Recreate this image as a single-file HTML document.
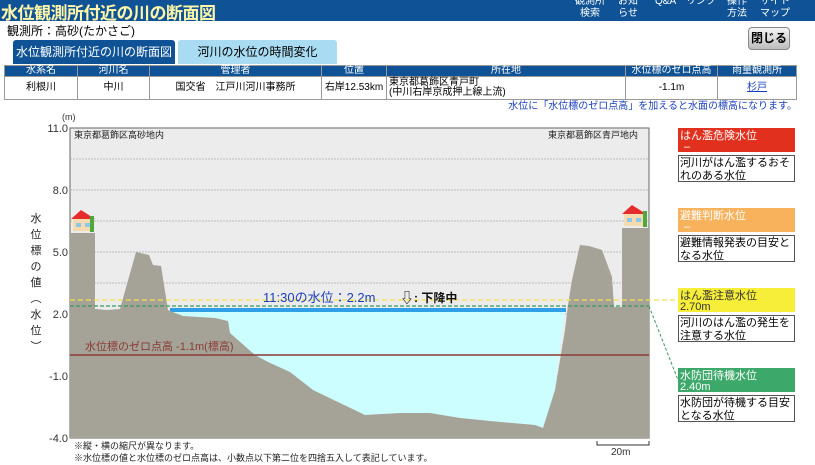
<!DOCTYPE html>
<html><head><meta charset="utf-8"><style>
*{margin:0;padding:0;box-sizing:border-box}
body{width:815px;height:465px;overflow:hidden;background:#fff;font-family:"Liberation Sans","Noto Sans CJK JP",sans-serif;position:relative}
.hd{position:absolute;left:0;top:0;width:815px;height:21px;background:#0f5396}
.hd .t{position:absolute;left:1px;top:-1px;font-size:17px;font-weight:bold;color:#fff6a8;letter-spacing:-0.5px}
.nav{position:absolute;top:-4px;font-size:10px;color:#fff;line-height:12px;text-align:center}
.obs{position:absolute;left:7px;top:22px;font-size:12px;color:#000}
.tab{position:absolute;top:40px;height:24px;font-size:12px;text-align:center;line-height:24px;border-radius:3px 3px 0 0}
.close{position:absolute;left:748px;top:27px;width:42px;height:23px;border-radius:4px;background:linear-gradient(#f4f4f4,#bdbdbd);border:1px solid #888;font-size:12px;font-weight:bold;text-align:center;line-height:21px}
table{position:absolute;left:4px;top:65px;width:793px;border-collapse:collapse;font-size:10px}
th{background:#0f5396;color:#fff;font-weight:normal;height:11px;line-height:10px;border:1px solid #999;padding:0}
td{height:23px;border:1px solid #999;text-align:center;line-height:10px;padding:0}
.note{position:absolute;right:18px;top:97px;font-size:10px;color:#1a3fbf}
svg{position:absolute;left:0;top:0}
</style></head><body>
<div class="hd"><div class="t">水位観測所付近の川の断面図</div>
<div class="nav" style="left:575px">観測所<br>検索</div>
<div class="nav" style="left:618px">お知<br>らせ</div>
<div class="nav" style="left:655px">Q&amp;A</div>
<div class="nav" style="left:686px">リンク</div>
<div class="nav" style="left:727px">操作<br>方法</div>
<div class="nav" style="left:760px">サイト<br>マップ</div>
</div>
<div class="obs">観測所：高砂(たかさご)</div>
<div class="tab" style="left:13px;width:162px;background:#0f5396;color:#fff">水位観測所付近の川の断面図</div>
<div class="tab" style="left:178px;width:159px;background:#a9dcf2;color:#000">河川の水位の時間変化</div>
<div class="close">閉じる</div>
<table><tr><th style="width:73px">水系名</th><th style="width:72px">河川名</th><th style="width:172px">管理者</th><th style="width:65px">位置</th><th style="width:239px">所在地</th><th style="width:92px">水位標のゼロ点高</th><th>雨量観測所</th></tr>
<tr><td>利根川</td><td>中川</td><td>国交省　江戸川河川事務所</td><td>右岸12.53km</td><td style="text-align:left;padding-left:2px">東京都葛飾区青戸町<br>(中川右岸京成押上線上流)</td><td>-1.1m</td><td><span style="color:#1a3fbf;text-decoration:underline">杉戸</span></td></tr></table>
<div class="note">水位に「水位標のゼロ点高」を加えると水面の標高になります。</div>
<svg width="815" height="465" font-family="Liberation Sans,Noto Sans CJK JP,sans-serif">
<rect x="70" y="128" width="579" height="310" fill="#ececec" stroke="#666" stroke-width="1"/>
<g stroke="#aaa" stroke-dasharray="2,1" stroke-width="0.7">
<line x1="70" y1="159" x2="649" y2="159"/><line x1="70" y1="190" x2="649" y2="190"/><line x1="70" y1="221" x2="649" y2="221"/><line x1="70" y1="252" x2="649" y2="252"/><line x1="70" y1="283" x2="649" y2="283"/><line x1="70" y1="314" x2="649" y2="314"/><line x1="70" y1="345" x2="649" y2="345"/><line x1="70" y1="376" x2="649" y2="376"/><line x1="70" y1="407" x2="649" y2="407"/>
</g>
<polygon points="170,310 565,310 555,390 543,428 535,425 490,421 460,418 430,413 400,413 365,415 340,403 313,390 290,372 268,362 255,355 230,333 228,321 215,318 183,316 170,311" fill="#ccfeff"/>
<rect x="170" y="308" width="396" height="4" fill="#2f9fe6"/>
<polygon points="70,233 95,233 95,309 107,310 120,309 136,252 149,255 153,265 161,266 168,310 170,311 183,316 215,318 228,321 230,333 255,355 268,362 290,372 313,390 340,403 365,415 400,413 430,413 460,418 490,421 535,425 543,428 555,390 565,330 568,305 572,280 580,245 589,246 602,250 612,277 614,307 622,307 622,228 649,228 649,438 70,438" fill="#a5a298"/>
<line x1="70" y1="355" x2="649" y2="355" stroke="#8b3a33" stroke-width="1.5"/>
<line x1="70" y1="300" x2="678" y2="300" stroke="#f2e34a" stroke-dasharray="5,3" stroke-width="1.3"/>
<line x1="70" y1="306" x2="649" y2="306" stroke="#3a9a5c" stroke-dasharray="4,2" stroke-width="1.2"/>
<line x1="649" y1="306" x2="678" y2="380" stroke="#3a9a5c" stroke-dasharray="3,2" stroke-width="1"/>
<g font-size="9" fill="#222"><text x="74" y="138">東京都葛飾区高砂地内</text><text x="548" y="138">東京都葛飾区青戸地内</text></g>
<!-- houses -->
<g><rect x="73" y="218" width="20" height="13" fill="#f6dbb0"/><polygon points="71,219 81,210 95,219" fill="#e52b2b"/><rect x="76" y="223" width="5" height="4" fill="#8cc8e8"/><rect x="85" y="223" width="5" height="4" fill="#8cc8e8"/><rect x="90" y="216" width="4" height="16" fill="#4caa3c"/></g>
<g><rect x="624" y="213" width="20" height="13" fill="#f6dbb0"/><polygon points="622,214 632,205 646,214" fill="#e52b2b"/><rect x="627" y="218" width="5" height="4" fill="#8cc8e8"/><rect x="636" y="218" width="5" height="4" fill="#8cc8e8"/><rect x="643" y="211" width="4" height="16" fill="#4caa3c"/></g>
<g font-size="11" fill="#333" text-anchor="end"><text x="68" y="132">11.0</text><text x="68" y="194">8.0</text><text x="68" y="256">5.0</text><text x="68" y="318">2.0</text><text x="68" y="380">-1.0</text><text x="68" y="442">-4.0</text></g>
<text x="62" y="120" font-size="9" fill="#333">(m)</text>
<g font-size="11" fill="#222" text-anchor="middle"><text x="36" y="222">水</text><text x="36" y="238">位</text><text x="36" y="254">標</text><text x="36" y="270">の</text><text x="36" y="286">値</text><text x="36" y="302">︵</text><text x="36" y="318">水</text><text x="36" y="334">位</text><text x="36" y="350">︶</text></g>
<text x="263" y="302" font-size="13" fill="#1a3fbf">11:30の水位：2.2m</text>
<text x="400" y="303" font-size="14" fill="#111">⇩</text>
<text x="414" y="302" font-size="12" font-weight="bold" fill="#111">: 下降中</text>
<text x="85" y="350" font-size="11" fill="#8b3a33">水位標のゼロ点高 -1.1m(標高)</text>
<g font-size="9" fill="#222"><text x="74" y="449">※縦・横の縮尺が異なります。</text><text x="74" y="461">※水位標の値と水位標のゼロ点高は、小数点以下第二位を四捨五入して表記しています。</text></g>
<path d="M597,441 v4 h52 v-4" fill="none" stroke="#333"/><text x="611" y="455" font-size="10" fill="#333">20m</text>
<!-- legend -->
<g font-size="11">
<rect x="678" y="128" width="117" height="24" fill="#e2301f"/><text x="680" y="139" fill="#fff">はん濫危険水位</text><text x="684" y="150" fill="#fff">–</text>
<rect x="678.5" y="155.5" width="116" height="26" fill="#fff" stroke="#555"/><text x="680" y="166">河川がはん濫するおそ</text><text x="680" y="179">れのある水位</text>
<rect x="678" y="208" width="117" height="24" fill="#f8b25c"/><text x="680" y="219" fill="#fff">避難判断水位</text><text x="684" y="230" fill="#fff">–</text>
<rect x="678.5" y="235.5" width="116" height="26" fill="#fff" stroke="#555"/><text x="680" y="246">避難情報発表の目安と</text><text x="680" y="259">なる水位</text>
<rect x="678" y="288" width="117" height="24" fill="#f7ee3a"/><text x="680" y="299" fill="#333">はん濫注意水位</text><text x="680" y="310" fill="#333">2.70m</text>
<rect x="678.5" y="315.5" width="116" height="26" fill="#fff" stroke="#555"/><text x="680" y="326">河川のはん濫の発生を</text><text x="680" y="339">注意する水位</text>
<rect x="678" y="368" width="117" height="24" fill="#3ca86a"/><text x="680" y="379" fill="#fff">水防団待機水位</text><text x="680" y="390" fill="#fff">2.40m</text>
<rect x="678.5" y="395.5" width="116" height="26" fill="#fff" stroke="#555"/><text x="680" y="406">水防団が待機する目安</text><text x="680" y="419">となる水位</text>
</g>
</svg>
</body></html>
